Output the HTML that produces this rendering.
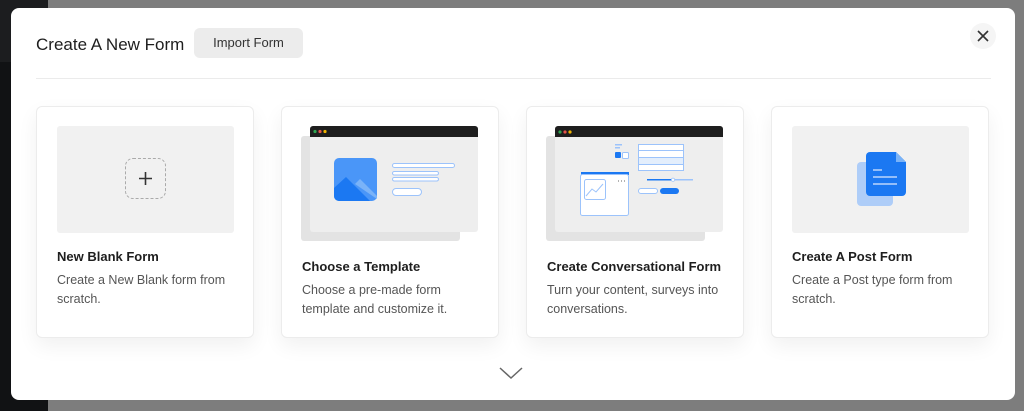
<!DOCTYPE html>
<html><head><meta charset="utf-8"><style>
*{box-sizing:border-box;margin:0;padding:0}
body{width:1024px;height:411px;overflow:hidden;background:#7d7d7d;font-family:"Liberation Sans",sans-serif;position:relative}
.side{position:absolute;left:0;top:0;width:48px;height:411px;background:#111214}
.side2{position:absolute;left:0;top:0;width:48px;height:62px;background:#1c1d1f}
.modal{position:absolute;left:11px;top:8px;width:1004px;height:392px;background:#fff;border-radius:8px}
.abs{position:absolute}
h1{position:absolute;left:25px;top:27px;font-size:17px;font-weight:normal;color:#1e1e1e}
.imp{position:absolute;left:183px;top:20px;width:109px;height:30px;background:#ececec;border-radius:6px;font-size:13px;color:#333;text-align:center;line-height:30px}
.close{position:absolute;left:959px;top:15px;width:26px;height:26px;border-radius:50%;background:#f5f5f5}
.hr{position:absolute;left:25px;top:70px;width:955px;height:1px;background:#ebebeb}
.card{position:absolute;top:98px;width:218px;height:232px;background:#fff;border:1px solid #ececec;border-radius:6px;box-shadow:0 8px 20px rgba(0,0,0,0.06)}
.card h3{position:absolute;left:20px;font-size:13px;font-weight:bold;color:#1e1e1e}
.card p{position:absolute;left:20px;width:185px;font-size:12.5px;line-height:19px;color:#555}
.img{position:absolute;left:20px;top:19px;width:177px;height:107px;background:#f1f1f1;border-radius:3px}
</style></head><body>
<div class="side"></div><div class="side2"></div>
<div class="modal">
<h1>Create A New Form</h1>
<div class="imp">Import Form</div>
<div class="close"><svg width="26" height="26"><path d="M8 8L18 18M18 8L8 18" stroke="#333" stroke-width="1.6"/></svg></div>
<div class="hr"></div>

<div class="card" style="left:25px">
<div class="img"><div class="abs" style="left:68px;top:32px;width:41px;height:41px;border:1.5px dashed #aaa;border-radius:8px"></div>
<svg class="abs" style="left:80px;top:44px" width="17" height="17"><path d="M8.5 2V15M2 8.5H15" stroke="#333" stroke-width="1.6"/></svg></div>
<h3 style="top:142px">New Blank Form</h3>
<p style="top:164px">Create a New Blank form from scratch.</p>
</div>

<div class="card" style="left:270px">
<svg class="abs" style="left:18px;top:19px" width="180" height="118">
<rect x="1" y="10" width="159" height="105" rx="3" fill="#e3e3e3"/>
<rect x="10" y="0" width="168" height="106" rx="3" fill="#eeeeee"/>
<path d="M10 3a3 3 0 0 1 3-3h162a3 3 0 0 1 3 3v8H10z" fill="#1e1e1e"/>
<circle cx="15" cy="5.5" r="1.6" fill="#2ea44f"/><circle cx="20" cy="5.5" r="1.6" fill="#e5534b"/><circle cx="25" cy="5.5" r="1.6" fill="#f0b400"/>
<rect x="34" y="32" width="43" height="43" rx="5" fill="#4a96f8"/>
<path d="M34 62l12-11 24 24H39a5 5 0 0 1-5-5z" fill="#1b78f2"/>
<path d="M55 58l5-5 17 17v3z" fill="#7ab3f8"/>
<rect x="92.5" y="37.5" width="62" height="4" rx="2" fill="#fff" stroke="#9cc3fb"/>
<rect x="92.5" y="45.5" width="46" height="3.5" rx="1.7" fill="#fff" stroke="#9cc3fb"/>
<rect x="92.5" y="51.5" width="46" height="3.5" rx="1.7" fill="#fff" stroke="#9cc3fb"/>
<rect x="92.5" y="62.5" width="29" height="7" rx="3.5" fill="#fff" stroke="#9cc3fb"/>
</svg>
<h3 style="top:152px">Choose a Template</h3>
<p style="top:174px">Choose a pre-made form template and customize it.</p>
</div>

<div class="card" style="left:515px">
<svg class="abs" style="left:18px;top:19px" width="180" height="118">
<rect x="1" y="10" width="159" height="105" rx="3" fill="#e3e3e3"/>
<rect x="10" y="0" width="168" height="106" rx="3" fill="#eeeeee"/>
<path d="M10 3a3 3 0 0 1 3-3h162a3 3 0 0 1 3 3v8H10z" fill="#1e1e1e"/>
<circle cx="15" cy="6" r="1.6" fill="#2ea44f"/><circle cx="20" cy="6" r="1.6" fill="#e5534b"/><circle cx="25" cy="6" r="1.6" fill="#f0b400"/>
<rect x="70" y="18" width="7" height="1.5" fill="#9cc3fb"/><rect x="70" y="21" width="5" height="1.5" fill="#9cc3fb"/>
<rect x="70" y="26" width="6" height="6" rx="1" fill="#1b78f2"/><rect x="77.5" y="26.5" width="6" height="6" rx="1" fill="#fff" stroke="#9cc3fb"/>
<rect x="93.5" y="18.5" width="45" height="26" fill="#fff" stroke="#9cc3fb"/>
<path d="M93.5 24.5h45M93.5 31.5h45M93.5 38.5h45" stroke="#9cc3fb"/>
<rect x="93.5" y="31.5" width="45" height="7" fill="#e3eefc" stroke="#9cc3fb"/>
<rect x="36" y="46" width="48" height="3" fill="#1b78f2"/>
<rect x="35.5" y="48.5" width="48" height="41" rx="2" fill="#fff" stroke="#9cc3fb"/>
<rect x="39.5" y="53.5" width="21" height="20" rx="2" fill="#fff" stroke="#9cc3fb"/>
<path d="M41 70l6-7 4 3 7-8" stroke="#9cc3fb" fill="none"/>
<path d="M73 55h1M76 55h1M79 55h1" stroke="#666"/>
<rect x="102" y="53" width="46" height="1.5" fill="#9cc3fb"/><rect x="102" y="53" width="25" height="1.5" fill="#1b78f2"/><circle cx="128" cy="53.7" r="1.6" fill="#fff" stroke="#9cc3fb" stroke-width=".7"/>
<rect x="93.5" y="62.5" width="19" height="5" rx="2.5" fill="#fff" stroke="#9cc3fb"/>
<rect x="115" y="62" width="19" height="6" rx="3" fill="#1b78f2"/>
</svg>
<h3 style="top:152px">Create Conversational Form</h3>
<p style="top:174px">Turn your content, surveys into conversations.</p>
</div>

<div class="card" style="left:760px">
<div class="img"><svg class="abs" style="left:64px;top:26px" width="50" height="56">
<rect x="1" y="10" width="36" height="44" rx="4" fill="#aecdf8"/>
<path d="M14 0h26l10 10v30a4 4 0 0 1-4 4H14a4 4 0 0 1-4-4V4a4 4 0 0 1 4-4z" fill="#1b78f2"/>
<path d="M40 0v10h10z" fill="#7ab3f8"/>
<path d="M17 18h9M17 25h24M17 32h24" stroke="#bcd6fb" stroke-width="1.6"/>
</svg></div>
<h3 style="top:142px">Create A Post Form</h3>
<p style="top:164px">Create a Post type form from scratch.</p>
</div>

<svg class="abs" style="left:488px;top:358px" width="24" height="14"><path d="M1 2l11 10 11-10" stroke="#666" stroke-width="1.5" fill="none"/></svg>
</div>
</body></html>
